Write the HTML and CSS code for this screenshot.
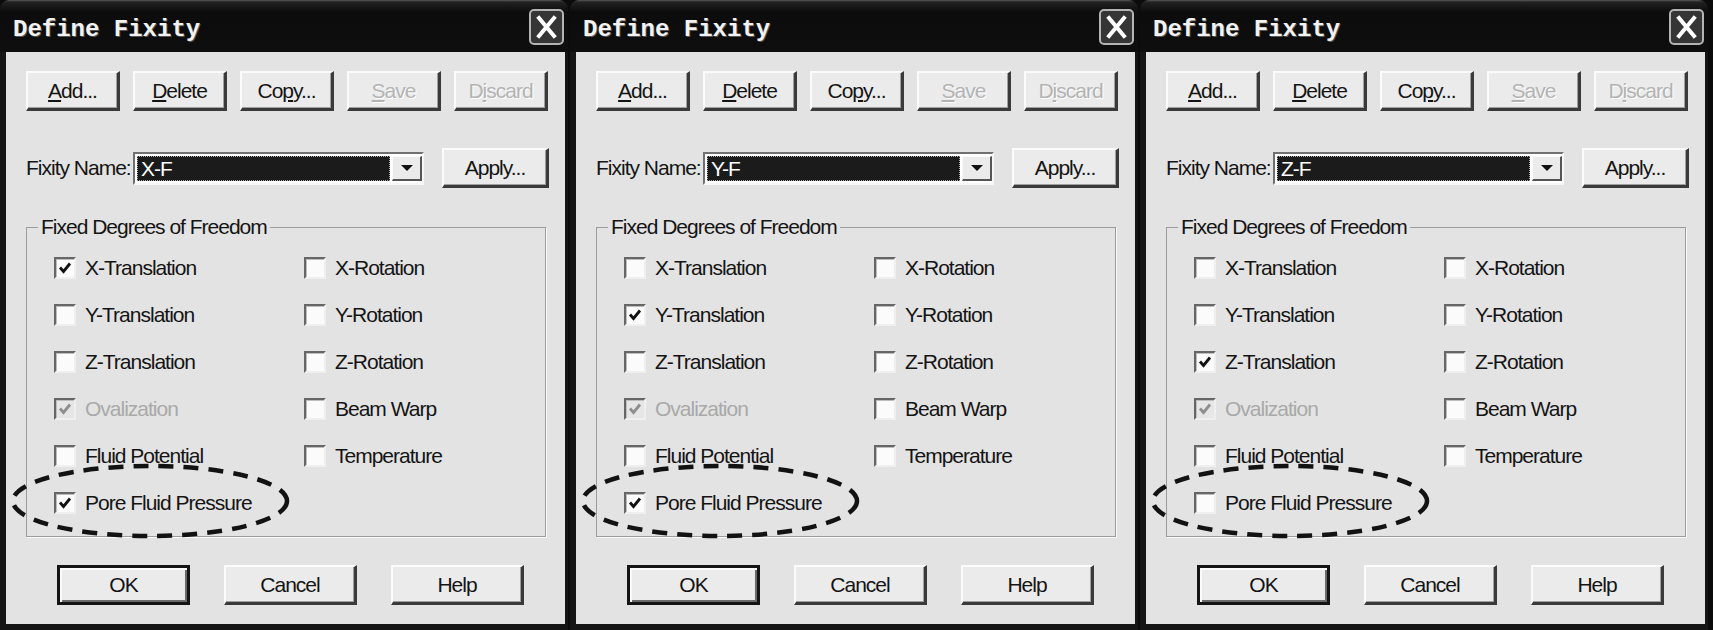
FILE: index.html
```html
<!DOCTYPE html>
<html>
<head>
<meta charset="utf-8">
<title>Define Fixity</title>
<link rel="stylesheet" href="styles.css">
</head>
<body>
<div class="screen">

  <div class="dialog">
    <div class="titlebar">
      <span class="title">Define Fixity</span>
      <span class="close"><svg width="35" height="36" viewBox="0 0 35 36"><rect x="1" y="1" width="33" height="34" rx="4" fill="#353535" stroke="#b4b4b4" stroke-width="2"/><path d="M10 9 L25 27 M25 9 L10 27" stroke="#fff" stroke-width="4" stroke-linecap="square"/></svg></span>
    </div>
    <div class="frame">
      <div class="toolbar">
        <button class="btn"><u>A</u>dd...</button>
        <button class="btn"><u>D</u>elete</button>
        <button class="btn">Co<u>p</u>y...</button>
        <button class="btn disabled"><u>S</u>ave</button>
        <button class="btn disabled">D<u>i</u>scard</button>
      </div>
      <div class="namerow">
        <span class="label">Fixity Name:</span>
        <div class="combo">
          <span class="combo-value">X-F</span>
          <span class="combo-btn"><svg width="14" height="8" viewBox="0 0 14 8"><path d="M1 1 H13 L7 7 Z" fill="#111"/></svg></span>
        </div>
        <button class="btn apply">Apply...</button>
      </div>
      <fieldset class="group">
        <legend>Fixed Degrees of Freedom</legend>
        <div class="grid">
          <div class="opt"><span class="cb"><svg class="tick" viewBox="0 0 18 18"><path d="M4 8.5 L7.5 12.5 L14 4.5"/></svg></span><span>X-Translation</span></div>
          <div class="opt"><span class="cb"></span><span>X-Rotation</span></div>
          <div class="opt"><span class="cb"></span><span>Y-Translation</span></div>
          <div class="opt"><span class="cb"></span><span>Y-Rotation</span></div>
          <div class="opt"><span class="cb"></span><span>Z-Translation</span></div>
          <div class="opt"><span class="cb"></span><span>Z-Rotation</span></div>
          <div class="opt off"><span class="cb"><svg class="tick" viewBox="0 0 18 18"><path d="M4 8.5 L7.5 12.5 L14 4.5"/></svg></span><span>Ovalization</span></div>
          <div class="opt"><span class="cb"></span><span>Beam Warp</span></div>
          <div class="opt"><span class="cb"></span><span>Fluid Potential</span></div>
          <div class="opt"><span class="cb"></span><span>Temperature</span></div>
          <div class="opt"><span class="cb"><svg class="tick" viewBox="0 0 18 18"><path d="M4 8.5 L7.5 12.5 L14 4.5"/></svg></span><span>Pore Fluid Pressure</span></div>
        </div>
      </fieldset>
      <div class="footer">
        <button class="btn big default">OK</button>
        <button class="btn big">Cancel</button>
        <button class="btn big">Help</button>
      </div>
    </div>
    <svg class="ellipse" width="290" height="80" viewBox="0 0 290 80"><ellipse cx="142" cy="39" rx="137" ry="35"/></svg>
  </div>

  <div class="dialog">
    <div class="titlebar">
      <span class="title">Define Fixity</span>
      <span class="close"><svg width="35" height="36" viewBox="0 0 35 36"><rect x="1" y="1" width="33" height="34" rx="4" fill="#353535" stroke="#b4b4b4" stroke-width="2"/><path d="M10 9 L25 27 M25 9 L10 27" stroke="#fff" stroke-width="4" stroke-linecap="square"/></svg></span>
    </div>
    <div class="frame">
      <div class="toolbar">
        <button class="btn"><u>A</u>dd...</button>
        <button class="btn"><u>D</u>elete</button>
        <button class="btn">Co<u>p</u>y...</button>
        <button class="btn disabled"><u>S</u>ave</button>
        <button class="btn disabled">D<u>i</u>scard</button>
      </div>
      <div class="namerow">
        <span class="label">Fixity Name:</span>
        <div class="combo">
          <span class="combo-value">Y-F</span>
          <span class="combo-btn"><svg width="14" height="8" viewBox="0 0 14 8"><path d="M1 1 H13 L7 7 Z" fill="#111"/></svg></span>
        </div>
        <button class="btn apply">Apply...</button>
      </div>
      <fieldset class="group">
        <legend>Fixed Degrees of Freedom</legend>
        <div class="grid">
          <div class="opt"><span class="cb"></span><span>X-Translation</span></div>
          <div class="opt"><span class="cb"></span><span>X-Rotation</span></div>
          <div class="opt"><span class="cb"><svg class="tick" viewBox="0 0 18 18"><path d="M4 8.5 L7.5 12.5 L14 4.5"/></svg></span><span>Y-Translation</span></div>
          <div class="opt"><span class="cb"></span><span>Y-Rotation</span></div>
          <div class="opt"><span class="cb"></span><span>Z-Translation</span></div>
          <div class="opt"><span class="cb"></span><span>Z-Rotation</span></div>
          <div class="opt off"><span class="cb"><svg class="tick" viewBox="0 0 18 18"><path d="M4 8.5 L7.5 12.5 L14 4.5"/></svg></span><span>Ovalization</span></div>
          <div class="opt"><span class="cb"></span><span>Beam Warp</span></div>
          <div class="opt"><span class="cb"></span><span>Fluid Potential</span></div>
          <div class="opt"><span class="cb"></span><span>Temperature</span></div>
          <div class="opt"><span class="cb"><svg class="tick" viewBox="0 0 18 18"><path d="M4 8.5 L7.5 12.5 L14 4.5"/></svg></span><span>Pore Fluid Pressure</span></div>
        </div>
      </fieldset>
      <div class="footer">
        <button class="btn big default">OK</button>
        <button class="btn big">Cancel</button>
        <button class="btn big">Help</button>
      </div>
    </div>
    <svg class="ellipse" width="290" height="80" viewBox="0 0 290 80"><ellipse cx="142" cy="39" rx="137" ry="35"/></svg>
  </div>

  <div class="dialog">
    <div class="titlebar">
      <span class="title">Define Fixity</span>
      <span class="close"><svg width="35" height="36" viewBox="0 0 35 36"><rect x="1" y="1" width="33" height="34" rx="4" fill="#353535" stroke="#b4b4b4" stroke-width="2"/><path d="M10 9 L25 27 M25 9 L10 27" stroke="#fff" stroke-width="4" stroke-linecap="square"/></svg></span>
    </div>
    <div class="frame">
      <div class="toolbar">
        <button class="btn"><u>A</u>dd...</button>
        <button class="btn"><u>D</u>elete</button>
        <button class="btn">Co<u>p</u>y...</button>
        <button class="btn disabled"><u>S</u>ave</button>
        <button class="btn disabled">D<u>i</u>scard</button>
      </div>
      <div class="namerow">
        <span class="label">Fixity Name:</span>
        <div class="combo">
          <span class="combo-value">Z-F</span>
          <span class="combo-btn"><svg width="14" height="8" viewBox="0 0 14 8"><path d="M1 1 H13 L7 7 Z" fill="#111"/></svg></span>
        </div>
        <button class="btn apply">Apply...</button>
      </div>
      <fieldset class="group">
        <legend>Fixed Degrees of Freedom</legend>
        <div class="grid">
          <div class="opt"><span class="cb"></span><span>X-Translation</span></div>
          <div class="opt"><span class="cb"></span><span>X-Rotation</span></div>
          <div class="opt"><span class="cb"></span><span>Y-Translation</span></div>
          <div class="opt"><span class="cb"></span><span>Y-Rotation</span></div>
          <div class="opt"><span class="cb"><svg class="tick" viewBox="0 0 18 18"><path d="M4 8.5 L7.5 12.5 L14 4.5"/></svg></span><span>Z-Translation</span></div>
          <div class="opt"><span class="cb"></span><span>Z-Rotation</span></div>
          <div class="opt off"><span class="cb"><svg class="tick" viewBox="0 0 18 18"><path d="M4 8.5 L7.5 12.5 L14 4.5"/></svg></span><span>Ovalization</span></div>
          <div class="opt"><span class="cb"></span><span>Beam Warp</span></div>
          <div class="opt"><span class="cb"></span><span>Fluid Potential</span></div>
          <div class="opt"><span class="cb"></span><span>Temperature</span></div>
          <div class="opt"><span class="cb"></span><span>Pore Fluid Pressure</span></div>
        </div>
      </fieldset>
      <div class="footer">
        <button class="btn big default">OK</button>
        <button class="btn big">Cancel</button>
        <button class="btn big">Help</button>
      </div>
    </div>
    <svg class="ellipse" width="290" height="80" viewBox="0 0 290 80"><ellipse cx="142" cy="39" rx="137" ry="35"/></svg>
  </div>

</div>
</body>
</html>
```

FILE: styles.css
```css
* { box-sizing: border-box; }

html, body {
  margin: 0;
  padding: 0;
}

body {
  width: 1713px;
  height: 630px;
  overflow: hidden;
  background: #0b0b0b;
  font-family: "Liberation Sans", Arial, sans-serif;
  font-size: 21px;
  letter-spacing: -1px;
  color: #141414;
}

.screen {
  display: flex;
  gap: 2px;
  height: 630px;
}

.dialog {
  position: relative;
  width: 568px;
  height: 630px;
  display: flex;
  flex-direction: column;
  flex: none;
}

.titlebar {
  height: 52px;
  flex: none;
  display: flex;
  justify-content: space-between;
  align-items: flex-start;
  padding: 0 4px 0 13px;
  border-radius: 9px 9px 0 0;
  background: linear-gradient(#5a5a5a 0, #222 2px, #0c0c0c 12px, #0e0e0e 100%);
}

.title {
  margin-top: 17px;
  font-family: "Liberation Mono", "DejaVu Sans Mono", monospace;
  font-weight: bold;
  font-size: 24px;
  line-height: 26px;
  letter-spacing: 0;
  color: #f2f2f2;
  text-shadow: 1px 1px 0 #555;
}

.close {
  margin-top: 9px;
  width: 35px;
  height: 36px;
}

.close svg { display: block; }

.frame {
  flex: 1;
  border-style: solid;
  border-color: #151515;
  border-width: 0 3px 6px 6px;
  background: #e3e3e3;
  padding: 19px 16px 19px 20px;
}

.toolbar {
  display: flex;
  gap: 13px;
  height: 40px;
}

.btn {
  width: 94px;
  height: 40px;
  padding: 0;
  font: inherit;
  letter-spacing: inherit;
  color: #141414;
  background: #ebebeb;
  border-style: solid;
  border-width: 2px 3px 3px 2px;
  border-color: #fbfbfb #3a3a3a #3a3a3a #fbfbfb;
  box-shadow: inset -1px -1px 0 #a0a0a0;
  text-align: center;
}

.btn u {
  text-underline-offset: 2px;
  text-decoration-thickness: 2px;
}

.btn.disabled {
  color: #b3b3b3;
  text-shadow: 1px 1px 0 #fff;
}

.namerow {
  display: flex;
  align-items: center;
  height: 40px;
  margin-top: 37px;
}

.label {
  width: 107px;
  flex: none;
}

.combo {
  width: 291px;
  height: 33px;
  flex: none;
  display: flex;
  gap: 2px;
  padding: 2px 0 2px 2px;
  background: #fff;
  border: 2px solid;
  border-color: #707070 #f6f6f6 #f6f6f6 #707070;
}

.combo-value {
  flex: 1;
  background: #1b1b1b;
  color: #fff;
  line-height: 25px;
  padding-left: 4px;
  outline: 1px dotted #a8a8a8;
  outline-offset: -1px;
}

.combo-btn {
  width: 30px;
  flex: none;
  display: flex;
  align-items: center;
  justify-content: center;
  background: #ebebeb;
  border-style: solid;
  border-width: 1px 2px 2px 1px;
  border-color: #fafafa #555 #555 #fafafa;
}

.combo-btn svg { display: block; }

.btn.apply {
  width: 107px;
  margin-left: 18px;
}

.group {
  margin: 28px 0 0 0;
  width: 520px;
  min-width: 0;
  padding: 6px 0 10px 0;
  border: 1px solid #9c9c9c;
  box-shadow: 1px 1px 0 #fafafa;
}

.group legend {
  margin-left: 11px;
  padding: 0 3px;
  line-height: 22px;
  height: 22px;
}

.grid {
  margin-left: 27px;
  display: grid;
  grid-template-columns: 250px 1fr;
  grid-auto-rows: 47px;
}

.opt {
  display: flex;
  align-items: center;
  gap: 9px;
}

.cb {
  width: 22px;
  height: 22px;
  flex: none;
  background: #fbfbfb;
  border: 2px solid;
  border-color: #666 #efefef #efefef #666;
  box-shadow: inset 1px 1px 0 #bdbdbd;
}

.tick {
  display: block;
  width: 18px;
  height: 18px;
  fill: none;
  stroke: #111;
  stroke-width: 2.8;
}

.opt.off { color: #a9a9a9; }
.opt.off .cb { background: #e6e6e6; }
.opt.off .tick { stroke: #8e8e8e; }

.footer {
  display: flex;
  gap: 34px;
  margin-top: 28px;
  margin-left: 31px;
}

.btn.big {
  width: 133px;
  height: 40px;
}

.btn.default {
  border: 3px solid #141414;
  box-shadow: inset 2px 2px 0 #fbfbfb, inset -2px -2px 0 #6a6a6a;
}

.ellipse {
  position: absolute;
  left: 8px;
  top: 462px;
  pointer-events: none;
  overflow: visible;
  fill: none;
  stroke: #121212;
  stroke-width: 4.5;
  stroke-dasharray: 15 10;
}
```
